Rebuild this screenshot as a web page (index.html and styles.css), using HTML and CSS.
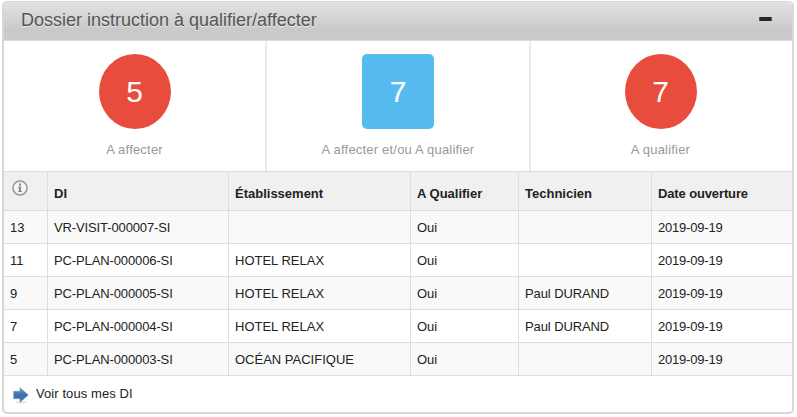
FILE: index.html
```
<!DOCTYPE html>
<html lang="fr">
<head>
<meta charset="utf-8">
<title>Dossier instruction</title>
<link rel="stylesheet" href="styles.css">
</head>
<body>
<section class="widget">
  <header class="widget-header"><h1><span>Dossier instruction à qualifier/affecter</span></h1><span class="collapse"></span></header>
  <div class="stats">
    <div class="stat"><div class="badge round">5</div><p><span>A affecter</span></p></div>
    <div class="stat"><div class="badge">7</div><p><span>A affecter et/ou A qualifier</span></p></div>
    <div class="stat"><div class="badge round">7</div><p><span>A qualifier</span></p></div>
  </div>
  <table>
    <colgroup><col class="c-id"><col class="c-di"><col class="c-etab"><col class="c-qual"><col class="c-tech"><col class="c-date"></colgroup>
    <thead>
      <tr><th class="info"><svg width="16" height="16" viewBox="0 0 16 16"><circle cx="8" cy="8" r="7" fill="#f4f4f4" stroke="#949494" stroke-width="1.5"/><path d="M7 3.600h2v1.800H7zM6.300 6.500H9v4.600h.8v1H6.200v-1H7V7.500h-.7z" fill="#858585"/></svg></th><th>DI</th><th>Établissement</th><th>A Qualifier</th><th>Technicien</th><th class="date">Date ouverture</th></tr>
    </thead>
    <tbody>
      <tr><td>13</td><td class="code">VR-VISIT-000007-SI</td><td></td><td>Oui</td><td></td><td class="date">2019-09-19</td></tr>
      <tr><td>11</td><td class="code">PC-PLAN-000006-SI</td><td>HOTEL RELAX</td><td>Oui</td><td></td><td class="date">2019-09-19</td></tr>
      <tr><td>9</td><td class="code">PC-PLAN-000005-SI</td><td>HOTEL RELAX</td><td>Oui</td><td class="name">Paul DURAND</td><td class="date">2019-09-19</td></tr>
      <tr><td>7</td><td class="code">PC-PLAN-000004-SI</td><td>HOTEL RELAX</td><td>Oui</td><td class="name">Paul DURAND</td><td class="date">2019-09-19</td></tr>
      <tr><td>5</td><td class="code">PC-PLAN-000003-SI</td><td>OCÉAN PACIFIQUE</td><td>Oui</td><td></td><td class="date">2019-09-19</td></tr>
    </tbody>
  </table>
  <footer class="more">
    <svg width="16" height="17" viewBox="0 0 16 17"><defs><linearGradient id="arrow" x1="0" y1="0" x2="0" y2="1"><stop offset="0" stop-color="#6c9acb"/><stop offset=".5" stop-color="#3f6fab"/><stop offset="1" stop-color="#4777b4"/></linearGradient></defs><ellipse cx="8" cy="15.300" rx="6" ry="1" fill="#e3e3e3"/><path d="M.7 4.300h6.300V.7L15.300 8l-8.300 7.300v-3.600H.7z" fill="url(#arrow)" stroke="#6f96c4" stroke-width=".6"/></svg>
    <span>Voir tous mes DI</span>
  </footer>
</section>
</body>
</html>
```
FILE: styles.css
```
* { box-sizing: border-box; }
body {
  margin: 0;
  padding: 1px 0 0 2px;
  background: #fff;
  font: 13px/16px "Liberation Sans", Arial, sans-serif;
  color: #222;
}
.widget {
  width: 792px;
  height: 413px;
  border: 2px solid #d8d8d8;
  border-top-width: 1px;
  border-radius: 5px;
  overflow: hidden;
}
.widget-header {
  height: 39px;
  display: flex;
  justify-content: space-between;
  padding: 6px 20px 0 17px;
  background: linear-gradient(#e2e2e2, #c9c9c9 75%, #cbcbcb);
  border-bottom: 1px solid #dcdcdc;
}
h1 {
  margin: 0;
  font-size: 18px;
  line-height: 24px;
  font-weight: normal;
  color: #555;
  text-shadow: 0 1px 0 #e8e8e8;
}
.collapse {
  width: 13px;
  height: 4px;
  margin-top: 9px;
  background: #262626;
  border: 1px solid #555;
  border-width: 0 1px;
}
.stats {
  height: 130px;
  display: grid;
  grid-template-columns: 263px 264px 1fr;
}
.stat {
  padding-top: 13px;
  display: flex;
  flex-direction: column;
  align-items: center;
  border-right: 2px solid #ebebeb;
}
.stat:last-child { border-right-color: transparent; }
.badge {
  width: 72px;
  height: 75px;
  border-radius: 5px;
  background: #56bcf0;
  color: #fff;
  font-size: 30px;
  line-height: 76px;
  text-align: center;
}
.badge.round { border-radius: 50%; background: #e74c3c; }
.stat p { margin: 13px 0 0; color: #999; letter-spacing: .2px; }
table {
  width: 788px;
  table-layout: fixed;
  border-collapse: separate;
  border-spacing: 0;
  border-top: 1px solid #ddd;
}
.c-id { width: 43px; }
.c-di { width: 181px; }
.c-etab { width: 182px; }
.c-qual { width: 108px; }
.c-tech { width: 133px; }
.c-date { width: 141px; }
th, td {
  padding: 0 6px;
  text-align: left;
  border-bottom: 1px solid #ddd;
  border-left: 1px solid #ddd;
  white-space: nowrap;
}
th:first-child, td:first-child { border-left: 0; }
th { height: 39px; padding-top: 6px; background: #f0f0f0; }
th.info { padding: 0 8px 7px; }
th svg { display: block; }
td { height: 33px; padding-top: 2px; }
td.code { letter-spacing: -.12px; }
td.name { letter-spacing: -.1px; }
td.date { letter-spacing: -.2px; }
th.date { letter-spacing: -.13px; }
tbody tr:nth-child(odd) { background: #f9f9f9; }
.more {
  height: 36px;
  display: flex;
  align-items: center;
  gap: 7px;
  padding-left: 9px;
  letter-spacing: .08px;
}
.more svg { margin-top: 3px; }
```
